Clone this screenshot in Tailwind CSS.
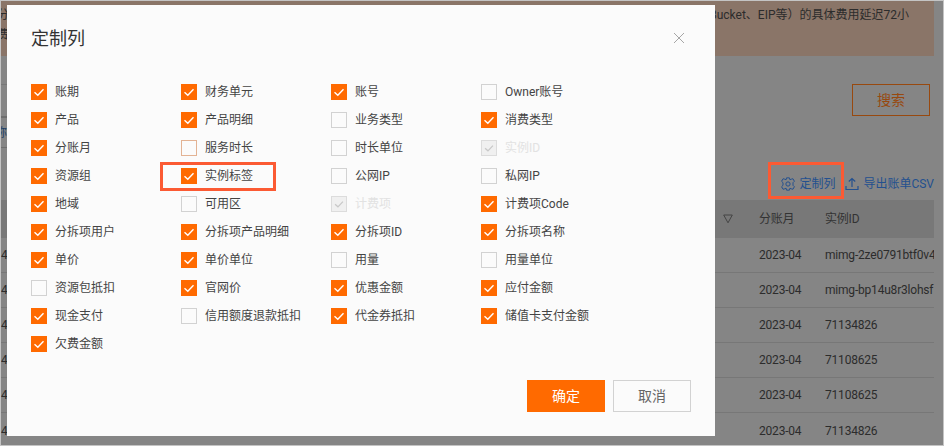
<!DOCTYPE html>
<html lang="zh-CN">
<head>
    <meta charset="UTF-8">
    <meta name="viewport" content="width=device-width, initial-scale=1.0">
    <title>定制列</title>
    <script src="https://cdn.jsdelivr.net/npm/@tailwindcss/browser@4"></script>
</head>
<body class="font-['Roboto','Noto_Sans_CJK_SC',sans-serif] text-[12px]">
    <svg class="hidden">
        <symbol id="tick" viewBox="0 0 16 16"><path d="M3.5 8.2 6.8 11.2 12.5 5.2" fill="none" stroke="currentColor" stroke-width="1.4"/></symbol>
    </svg>
    <div class="relative w-[944px] h-[446px] overflow-hidden border border-[#c4c4c4] bg-[#858585] text-[#2c2c2c]">

        <!-- page behind the mask -->
        <div class="flex justify-between w-[933px] h-[55px] pr-[25px] pt-[4px] bg-[#8a7568] leading-[20px]">
            <div class="-ml-[4px]">分<br>费</div>
            <div>(Bucket、EIP等）的具体费用延迟72小</div>
        </div>
        <div class="flex justify-between w-[933px] h-[144px] pt-[28px]">
            <div class="w-[6px] h-[64px] flex flex-col">
                <div class="h-[32px] border-t border-[#777]"></div>
                <div class="h-[32px] border-y border-t-2 border-[#6e6e6e] overflow-hidden leading-[30px] text-[#1d3f66]"><span class="block -ml-[6px]">称</span></div>
            </div>
            <div class="flex flex-col items-end">
                <button class="flex items-center justify-center w-[78px] h-[32px] mr-[4px] border border-[#98490f] text-[14px] text-[#98490f]">搜索</button>
                <div class="flex items-center h-[20px] mt-[58px] text-[#23508f] whitespace-nowrap">
                    <svg class="w-[16px] h-[16px] mr-[3px]" viewBox="0 0 24 24" fill="none" stroke="currentColor" stroke-width="1.5"><circle cx="12" cy="12" r="3.2"/><path d="M9.8 2.8h4.4l.7 2.9 2-.9 2.5-.7 2.200 3.800-2.100 2.100v4l2.100 2.100-2.200 3.800-2.500-.7-2-.9-.7 2.900H9.800l-.7-2.900-2 .9-2.500.7-2.200-3.800 2.100-2.100v-4L2.400 7.900l2.200-3.800 2.500.7 2 .9z" stroke-linejoin="round"/></svg>
                    <span>定制列</span>
                    <svg class="w-[14px] h-[14px] ml-[10px] mr-[4px]" viewBox="0 0 14 14" fill="none" stroke="currentColor" stroke-width="1.2"><path d="M7 10V1.500M3.800 4.500 7 1.500l3.200 3M1 9v3.500h12V9"/></svg>
                    <span>导出账单CSV</span>
                </div>
            </div>
        </div>
        <div class="w-[933px] tracking-[-0.2px]">
            <div class="grid grid-cols-[758px_66px_1fr] items-center h-[38px] bg-[#787878] text-[#333]">
                <div class="flex justify-end pr-[26px]">
                    <svg class="w-[10px] h-[10px]" viewBox="0 0 10 10" fill="none" stroke="#444" stroke-width="1"><path d="M.7 1h8.600L5 8.800z"/></svg>
                </div>
                <div>分账月</div>
                <div>实例ID</div>
            </div>
            <div class="grid grid-cols-[758px_66px_1fr] items-center h-[35px] border-b border-[#777]"><div>4</div><div>2023-04</div><div class="overflow-hidden whitespace-nowrap">mimg-2ze0791btf0v4</div></div>
            <div class="grid grid-cols-[758px_66px_1fr] items-center h-[35px] border-b border-[#777]"><div>4</div><div>2023-04</div><div class="overflow-hidden whitespace-nowrap">mimg-bp14u8r3lohsf</div></div>
            <div class="grid grid-cols-[758px_66px_1fr] items-center h-[35px] border-b border-[#777]"><div>4</div><div>2023-04</div><div>71134826</div></div>
            <div class="grid grid-cols-[758px_66px_1fr] items-center h-[35px] border-b border-[#777]"><div>4</div><div>2023-04</div><div>71108625</div></div>
            <div class="grid grid-cols-[758px_66px_1fr] items-center h-[35px] border-b border-[#777]"><div>4</div><div>2023-04</div><div>71108625</div></div>
            <div class="grid grid-cols-[758px_66px_1fr] items-center h-[35px]"><div>4</div><div>2023-04</div><div>71134826</div></div>
        </div>

        <!-- dialog -->
        <div class="absolute left-[6px] top-[4px] w-[708px] h-[431px] flex flex-col px-[24px] pb-[24px] bg-[#fbfbfb] text-[#444]">
            <div class="flex items-center justify-between h-[73px] pb-[9px] pt-[2px]">
                <h2 class="text-[18px] text-[#333]">定制列</h2>
                <svg class="w-[12px] h-[12px] mr-[6px]" viewBox="0 0 12 12" fill="none" stroke="#a6a6a6" stroke-width="1"><path d="M1 1l10 10M11 1 1 11"/></svg>
            </div>
            <div class="grid grid-cols-[150px_150px_150px_150px] auto-rows-[28px] items-center">
                <label class="flex items-center gap-[8px]"><span class="w-[16px] h-[16px] bg-[#ff6a00] text-white"><svg class="w-full h-full"><use href="#tick"/></svg></span>账期</label>
                <label class="flex items-center gap-[8px]"><span class="w-[16px] h-[16px] bg-[#ff6a00] text-white"><svg class="w-full h-full"><use href="#tick"/></svg></span>财务单元</label>
                <label class="flex items-center gap-[8px]"><span class="w-[16px] h-[16px] bg-[#ff6a00] text-white"><svg class="w-full h-full"><use href="#tick"/></svg></span>账号</label>
                <label class="flex items-center gap-[8px]"><span class="w-[16px] h-[16px] border border-[#d2d2d2]"></span>Owner账号</label>

                <label class="flex items-center gap-[8px]"><span class="w-[16px] h-[16px] bg-[#ff6a00] text-white"><svg class="w-full h-full"><use href="#tick"/></svg></span>产品</label>
                <label class="flex items-center gap-[8px]"><span class="w-[16px] h-[16px] bg-[#ff6a00] text-white"><svg class="w-full h-full"><use href="#tick"/></svg></span>产品明细</label>
                <label class="flex items-center gap-[8px]"><span class="w-[16px] h-[16px] border border-[#d2d2d2]"></span>业务类型</label>
                <label class="flex items-center gap-[8px]"><span class="w-[16px] h-[16px] bg-[#ff6a00] text-white"><svg class="w-full h-full"><use href="#tick"/></svg></span>消费类型</label>

                <label class="flex items-center gap-[8px]"><span class="w-[16px] h-[16px] bg-[#ff6a00] text-white"><svg class="w-full h-full"><use href="#tick"/></svg></span>分账月</label>
                <label class="flex items-center gap-[8px]"><span class="w-[16px] h-[16px] border border-[#e3b394]"></span>服务时长</label>
                <label class="flex items-center gap-[8px]"><span class="w-[16px] h-[16px] border border-[#d2d2d2]"></span>时长单位</label>
                <label class="flex items-center gap-[8px] text-[#e2e2e2]"><span class="w-[16px] h-[16px] border border-[#dcdcdc] bg-[#f0f0f0] text-[#c8c8c8]"><svg class="w-full h-full"><use href="#tick"/></svg></span>实例ID</label>

                <label class="flex items-center gap-[8px]"><span class="w-[16px] h-[16px] bg-[#ff6a00] text-white"><svg class="w-full h-full"><use href="#tick"/></svg></span>资源组</label>
                <label class="flex items-center gap-[8px]"><span class="w-[16px] h-[16px] bg-[#ff6a00] text-white"><svg class="w-full h-full"><use href="#tick"/></svg></span>实例标签</label>
                <label class="flex items-center gap-[8px]"><span class="w-[16px] h-[16px] border border-[#d2d2d2]"></span>公网IP</label>
                <label class="flex items-center gap-[8px]"><span class="w-[16px] h-[16px] border border-[#d2d2d2]"></span>私网IP</label>

                <label class="flex items-center gap-[8px]"><span class="w-[16px] h-[16px] bg-[#ff6a00] text-white"><svg class="w-full h-full"><use href="#tick"/></svg></span>地域</label>
                <label class="flex items-center gap-[8px]"><span class="w-[16px] h-[16px] border border-[#d2d2d2]"></span>可用区</label>
                <label class="flex items-center gap-[8px] text-[#e2e2e2]"><span class="w-[16px] h-[16px] border border-[#dcdcdc] bg-[#f0f0f0] text-[#c8c8c8]"><svg class="w-full h-full"><use href="#tick"/></svg></span>计费项</label>
                <label class="flex items-center gap-[8px]"><span class="w-[16px] h-[16px] bg-[#ff6a00] text-white"><svg class="w-full h-full"><use href="#tick"/></svg></span>计费项Code</label>

                <label class="flex items-center gap-[8px]"><span class="w-[16px] h-[16px] bg-[#ff6a00] text-white"><svg class="w-full h-full"><use href="#tick"/></svg></span>分拆项用户</label>
                <label class="flex items-center gap-[8px]"><span class="w-[16px] h-[16px] bg-[#ff6a00] text-white"><svg class="w-full h-full"><use href="#tick"/></svg></span>分拆项产品明细</label>
                <label class="flex items-center gap-[8px]"><span class="w-[16px] h-[16px] bg-[#ff6a00] text-white"><svg class="w-full h-full"><use href="#tick"/></svg></span>分拆项ID</label>
                <label class="flex items-center gap-[8px]"><span class="w-[16px] h-[16px] bg-[#ff6a00] text-white"><svg class="w-full h-full"><use href="#tick"/></svg></span>分拆项名称</label>

                <label class="flex items-center gap-[8px]"><span class="w-[16px] h-[16px] bg-[#ff6a00] text-white"><svg class="w-full h-full"><use href="#tick"/></svg></span>单价</label>
                <label class="flex items-center gap-[8px]"><span class="w-[16px] h-[16px] bg-[#ff6a00] text-white"><svg class="w-full h-full"><use href="#tick"/></svg></span>单价单位</label>
                <label class="flex items-center gap-[8px]"><span class="w-[16px] h-[16px] border border-[#d2d2d2]"></span>用量</label>
                <label class="flex items-center gap-[8px]"><span class="w-[16px] h-[16px] border border-[#d2d2d2]"></span>用量单位</label>

                <label class="flex items-center gap-[8px]"><span class="w-[16px] h-[16px] border border-[#d2d2d2]"></span>资源包抵扣</label>
                <label class="flex items-center gap-[8px]"><span class="w-[16px] h-[16px] bg-[#ff6a00] text-white"><svg class="w-full h-full"><use href="#tick"/></svg></span>官网价</label>
                <label class="flex items-center gap-[8px]"><span class="w-[16px] h-[16px] bg-[#ff6a00] text-white"><svg class="w-full h-full"><use href="#tick"/></svg></span>优惠金额</label>
                <label class="flex items-center gap-[8px]"><span class="w-[16px] h-[16px] bg-[#ff6a00] text-white"><svg class="w-full h-full"><use href="#tick"/></svg></span>应付金额</label>

                <label class="flex items-center gap-[8px]"><span class="w-[16px] h-[16px] bg-[#ff6a00] text-white"><svg class="w-full h-full"><use href="#tick"/></svg></span>现金支付</label>
                <label class="flex items-center gap-[8px]"><span class="w-[16px] h-[16px] border border-[#d2d2d2]"></span>信用额度退款抵扣</label>
                <label class="flex items-center gap-[8px]"><span class="w-[16px] h-[16px] bg-[#ff6a00] text-white"><svg class="w-full h-full"><use href="#tick"/></svg></span>代金券抵扣</label>
                <label class="flex items-center gap-[8px]"><span class="w-[16px] h-[16px] bg-[#ff6a00] text-white"><svg class="w-full h-full"><use href="#tick"/></svg></span>储值卡支付金额</label>

                <label class="flex items-center gap-[8px]"><span class="w-[16px] h-[16px] bg-[#ff6a00] text-white"><svg class="w-full h-full"><use href="#tick"/></svg></span>欠费金额</label>
            </div>
            <div class="flex justify-end gap-[8px] mt-auto">
                <button class="w-[78px] h-[32px] bg-[#ff6a00] text-[14px] text-white">确定</button>
                <button class="w-[78px] h-[32px] border border-[#d2d2d2] text-[14px] text-[#666]">取消</button>
            </div>
        </div>

        <!-- red annotation boxes -->
        <div class="absolute left-[159px] top-[161px] w-[116px] h-[29px] border-[3px] border-[#fb5a33]"></div>
        <div class="absolute left-[767px] top-[161px] w-[76px] h-[37px] border-[3px] border-[#fb5a33]"></div>
    </div>
</body>
</html>
